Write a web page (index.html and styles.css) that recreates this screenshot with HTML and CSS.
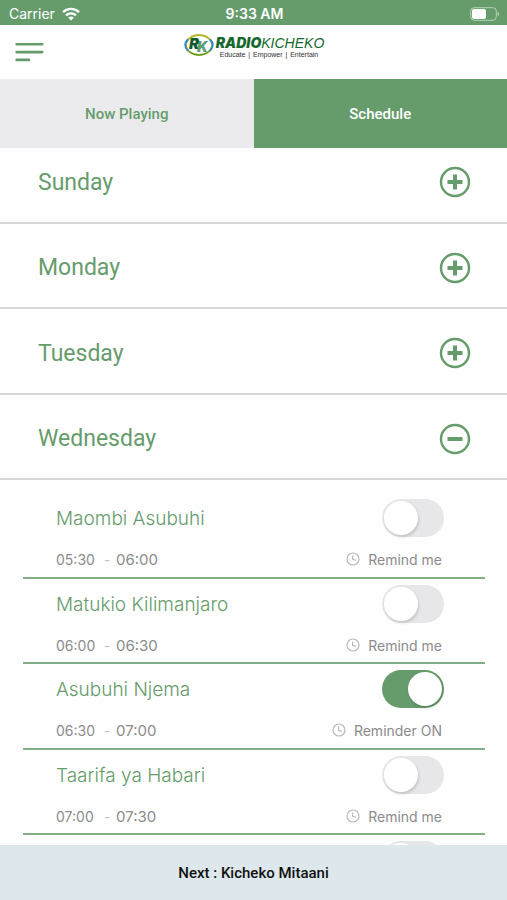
FILE: index.html
```html
<!DOCTYPE html>
<html lang="sw">
<head>
  <meta charset="UTF-8">
  <meta name="viewport" content="width=device-width, initial-scale=1">
  <title>Radio Kicheko</title>
  <link rel="stylesheet" href="styles.css">
</head>
<body>

  <div class="status-bar">
    <div class="carrier">
      <span>Carrier</span>
      <svg width="18" height="14" viewBox="0 0 18 14" fill="none" stroke="#fff" stroke-width="2.4">
        <path d="M1 5.2a11.4 11.4 0 0 1 16 0"/>
        <path d="M4 8.4a7.2 7.2 0 0 1 10 0"/>
        <path d="M9 13.6L6.2 10.8a4 4 0 0 1 5.6 0z" fill="#fff" stroke="none"/>
      </svg>
    </div>
    <div class="clock">9:33 AM</div>
    <div class="battery">
      <svg width="30" height="14" viewBox="0 0 30 14">
        <rect x="0.7" y="0.7" width="25.6" height="12.6" rx="3.5" fill="none" stroke="#b5d3b8" stroke-width="1"/>
        <rect x="2" y="2" width="14" height="10" rx="2" fill="#fff"/>
        <path d="M27.6 4.8c2 .6 2 3.8 0 4.4z" fill="#b5d3b8"/>
      </svg>
    </div>
  </div>

  <header class="header">
    <button class="menu" type="button" aria-label="Menu">
      <svg width="30" height="20" viewBox="0 0 30 20" stroke="#669c6c" stroke-width="2.6" stroke-linecap="round">
        <path d="M2.6 2.3h25.6M2.6 10.1h25.6M2.6 17.9h12.4"/>
      </svg>
    </button>
    <div class="logo">
      <svg width="32" height="24" viewBox="0 0 32 24">
        <ellipse cx="16" cy="12" rx="13" ry="10" fill="#fff" stroke="#b5b92c" stroke-width="2"/>
        <path d="M5 6.2C1.4 9.8 1.4 14.2 5 17.8M27 6.2c3.6 3.6 3.6 8 0 11.6" fill="none" stroke="#2d86d8" stroke-width="2"/>
        <path d="M5 17.5c5 6 17 6 22 0" fill="none" stroke="#3c8a3c" stroke-width="1"/>
        <text class="mark-k" x="14" y="19">K</text>
        <text class="mark-r" x="6" y="16">R</text>
      </svg>
      <div class="logo-text">
        <div class="logo-name"><b>RADIO</b><i>KICHEKO</i></div>
        <div class="logo-tag"><span>Educate</span><span>|</span><span>Empower</span><span>|</span><span>Entertain</span></div>
      </div>
    </div>
  </header>

  <nav class="tabs">
    <button type="button">Now Playing</button>
    <button class="active" type="button">Schedule</button>
  </nav>

  <main class="schedule">
    <div class="days">
      <button class="day" type="button">
        <span>Sunday</span>
        <svg width="32" height="32" viewBox="0 0 32 32" fill="none" stroke="#669c6c"><circle cx="16" cy="16" r="14" stroke-width="2.4"/><path d="M8.5 16h15M16 8.5v15" stroke-width="4"/></svg>
      </button>
      <button class="day" type="button">
        <span>Monday</span>
        <svg width="32" height="32" viewBox="0 0 32 32" fill="none" stroke="#669c6c"><circle cx="16" cy="16" r="14" stroke-width="2.4"/><path d="M8.5 16h15M16 8.5v15" stroke-width="4"/></svg>
      </button>
      <button class="day" type="button">
        <span>Tuesday</span>
        <svg width="32" height="32" viewBox="0 0 32 32" fill="none" stroke="#669c6c"><circle cx="16" cy="16" r="14" stroke-width="2.4"/><path d="M8.5 16h15M16 8.5v15" stroke-width="4"/></svg>
      </button>
      <button class="day" type="button" aria-expanded="true">
        <span>Wednesday</span>
        <svg width="32" height="32" viewBox="0 0 32 32" fill="none" stroke="#669c6c"><circle cx="16" cy="16" r="14" stroke-width="2.4"/><path d="M8.5 16h15" stroke-width="4"/></svg>
      </button>
    </div>

    <div class="programs">
      <div class="program">
        <div class="top">
          <h2>Maombi Asubuhi</h2>
          <input class="switch" type="checkbox" id="p1">
        </div>
        <div class="bottom">
          <span class="start">05:30</span><span class="dash">-</span><span class="end">06:00</span>
          <label for="p1"><svg width="14" height="14" viewBox="0 0 14 14" fill="none" stroke="#bbb" stroke-width="1.2"><circle cx="7" cy="7" r="6"/><path d="M6.6 3.4v4l3.2 1"/></svg>Remind me</label>
        </div>
      </div>
      <div class="program">
        <div class="top">
          <h2>Matukio Kilimanjaro</h2>
          <input class="switch" type="checkbox" id="p2">
        </div>
        <div class="bottom">
          <span class="start">06:00</span><span class="dash">-</span><span class="end">06:30</span>
          <label for="p2"><svg width="14" height="14" viewBox="0 0 14 14" fill="none" stroke="#bbb" stroke-width="1.2"><circle cx="7" cy="7" r="6"/><path d="M6.6 3.4v4l3.2 1"/></svg>Remind me</label>
        </div>
      </div>
      <div class="program">
        <div class="top">
          <h2>Asubuhi Njema</h2>
          <input class="switch" type="checkbox" id="p3" checked>
        </div>
        <div class="bottom">
          <span class="start">06:30</span><span class="dash">-</span><span class="end">07:00</span>
          <label for="p3"><svg width="14" height="14" viewBox="0 0 14 14" fill="none" stroke="#bbb" stroke-width="1.2"><circle cx="7" cy="7" r="6"/><path d="M6.6 3.4v4l3.2 1"/></svg>Reminder ON</label>
        </div>
      </div>
      <div class="program">
        <div class="top">
          <h2>Taarifa ya Habari</h2>
          <input class="switch" type="checkbox" id="p4">
        </div>
        <div class="bottom">
          <span class="start">07:00</span><span class="dash">-</span><span class="end">07:30</span>
          <label for="p4"><svg width="14" height="14" viewBox="0 0 14 14" fill="none" stroke="#bbb" stroke-width="1.2"><circle cx="7" cy="7" r="6"/><path d="M6.6 3.4v4l3.2 1"/></svg>Remind me</label>
        </div>
      </div>
      <div class="program">
        <div class="top">
          <input class="switch" type="checkbox" id="p5" aria-label="Remind me">
        </div>
      </div>
    </div>
  </main>

  <footer class="next">Next : Kicheko Mitaani</footer>

</body>
</html>
```
FILE: styles.css
```css
* { box-sizing: border-box; }
body { margin: 0; height: 100vh; display: flex; flex-direction: column; background: #fefefe; font-family: Roboto, sans-serif; color: #669c6c; }
button { border: 0; padding: 0; background: none; font-family: inherit; color: inherit; cursor: pointer; }
svg { display: block; flex: none; }

/* status bar */
.status-bar { flex: none; display: grid; grid-template-columns: 1fr auto 1fr; align-items: center; height: 25px; padding: 2px 7px 0 9px; background: #669c6c; color: #fff; font-family: Inter, sans-serif; font-size: 14px; }
.carrier { display: flex; align-items: center; gap: 7px; }
.clock { font-weight: 600; }
.battery { display: flex; justify-content: flex-end; }

/* header */
.header { flex: none; display: grid; grid-template-columns: 1fr auto 1fr; height: 54px; padding: 0 14px; }
.menu { justify-self: start; align-self: center; }
.logo { display: flex; align-items: flex-start; gap: 1px; padding-top: 8px; }
.logo-text { padding-top: 2px; }
.logo-name { font: italic 14px/15px "Liberation Sans", sans-serif; color: #17692f; }
.logo-name b { font-family: Inter, sans-serif; font-weight: 900; }
.logo-tag { display: flex; justify-content: space-between; padding: 0 6px 0 4px; font: 7px/7px "Liberation Sans", sans-serif; color: #333; }
.mark-r { font: italic 900 15px Inter, sans-serif; fill: #0e5a2a; }
.mark-k { font: italic 900 14px Inter, sans-serif; fill: #5f9f78; }

/* tabs */
.tabs { flex: none; display: flex; height: 69px; }
.tabs button { flex: 1; background: #ebebed; font-size: 15px; font-weight: 500; }
.tabs .active { background: #669c6c; color: #fff; }

/* schedule */
.schedule { flex: 1; min-height: 0; overflow: hidden; }
.days { margin-top: -10px; }
.day { display: flex; justify-content: space-between; align-items: center; width: 100%; height: 85px; padding: 4px 36px 0 38px; border-bottom: 2px solid #d8d8da; font-size: 23px; }
.day:nth-child(odd) { height: 86px; }
.programs { padding: 13px 22px 0 23px; }
.program { height: 86px; padding: 6px 41px 0 33px; border-bottom: 2px solid #82ae87; }
.program:nth-child(even) { height: 85px; }
.top { display: flex; align-items: center; height: 38px; }
.top h2 { margin: 0; font: 300 19px Inter, sans-serif; }
.bottom { display: flex; align-items: center; height: 20px; margin-top: 12px; padding-right: 2px; font-family: Inter, sans-serif; font-size: 14px; color: #8c8c8c; }
.start { width: 48px; }
.dash { width: 12px; color: #c4c4c4; }
.end { font-size: 15px; }
.bottom label { display: flex; align-items: center; gap: 8px; margin-left: auto; }

.switch { appearance: none; flex: none; width: 62px; height: 38px; margin: 0 0 0 auto; padding: 2px; border-radius: 19px; background: #e7e7e9; }
.switch::before { content: ""; display: block; width: 34px; height: 34px; border-radius: 50%; background: #fff; box-shadow: 1px 2px 3px rgba(0,0,0,0.15); }
.switch:checked { background: #669c6c; }
.switch:checked::before { margin-left: auto; }

.next { flex: none; display: flex; align-items: center; justify-content: center; height: 55px; background: #dde7ec; color: #111; font-size: 15px; font-weight: 500; }
```
